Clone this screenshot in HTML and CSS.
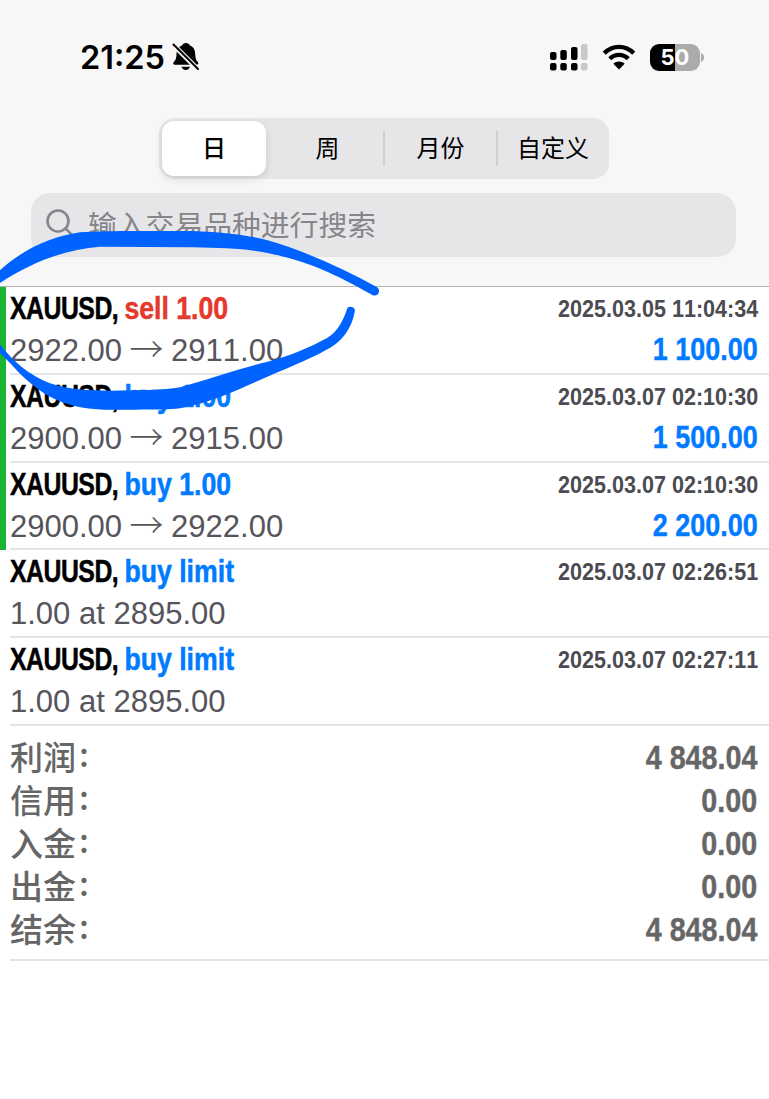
FILE: index.html
```html
<!DOCTYPE html>
<html lang="zh-CN">
<head>
  <meta charset="UTF-8">
  <meta name="viewport" content="width=device-width, initial-scale=1.0">
  <title>XAUUSD</title>
  <link rel="stylesheet" href="styles.css">
</head>
<body>
  <header class="header">
    <div class="status-bar">
      <div class="status-left">
        <span class="time">21:25</span>
        <svg class="bell" width="28" height="30" viewBox="0 0 28 30">
          <path d="M14 1c2 0 3.400 1 3.800 2.300 3.700 1.500 5.300 4.500 5.400 8.400.1 4.500.8 6.300 2.500 8.100 1 1.100 1 2.900-.7 2.900H2.500c-1.700 0-1.600-1.800-.6-2.900 1.800-1.800 2.500-3.600 2.600-8.100.1-3.900 1.900-6.900 5.700-8.400C10.600 2 12 1 14 1z"/>
          <path d="M9.500 24.700h8.500c-.5 2-2 3.200-4.200 3.200s-3.800-1.200-4.300-3.200z"/>
          <path d="M1 2.500l25 25" stroke="#f7f7f7" stroke-width="5"/>
          <path d="M1.500 2.500l24.500 24.500" stroke="#000" stroke-width="2" stroke-linecap="round"/>
        </svg>
      </div>
      <div class="status-right">
        <svg width="39" height="28" viewBox="0 0 39 28">
          <rect x="1" y="9" width="6.500" height="8" rx="2"/>
          <rect x="11.300" y="7" width="6.500" height="10" rx="2"/>
          <rect x="22" y="4" width="6.500" height="13" rx="2"/>
          <rect x="32" y="1" width="6.500" height="16" rx="2" fill="#c8c8c8"/>
          <rect x="1" y="20" width="6.500" height="7.500" rx="2"/>
          <rect x="11.300" y="20" width="6.500" height="7.500" rx="2"/>
          <rect x="22" y="20" width="6.500" height="7.500" rx="2"/>
          <rect x="32" y="20" width="6.500" height="7.500" rx="2" fill="#c8c8c8"/>
        </svg>
        <svg class="wifi" width="34" height="26" viewBox="0 0 34 26">
          <path d="M2.300 9.200C10.500.8 23.500.8 31.700 9.200" fill="none" stroke="#000" stroke-width="4.400"/>
          <path d="M7.800 14.800c5.200-5.200 13.200-5.200 18.400 0" fill="none" stroke="#000" stroke-width="4.400"/>
          <path d="M17 25.500l-5.700-5.700c3.200-3.200 8.200-3.200 11.400 0z"/>
        </svg>
        <div class="battery"><span>50</span></div>
        <svg class="battery-tip" width="4" height="9" viewBox="0 0 4 9"><path d="M0 0c4 1.500 4 7.500 0 9z" fill="#ababab"/></svg>
      </div>
    </div>
    <div class="tabs">
      <div class="tab active">日</div>
      <div class="tab">周</div>
      <div class="tab divided">月份</div>
      <div class="tab divided">自定义</div>
    </div>
    <div class="search">
      <svg width="29" height="29" viewBox="0 0 29 29" fill="none" stroke="#85858a" stroke-width="2.600" stroke-linecap="round">
        <circle cx="12" cy="12" r="10.500"/>
        <path d="M19.700 19.700l7.500 7.500"/>
      </svg>
      <span>输入交易品种进行搜索</span>
    </div>
  </header>

  <main>
    <div class="deal closed">
      <div class="line">
        <div class="title"><span class="symbol">XAUUSD,</span><span class="sell">sell 1.00</span></div>
        <div class="date">2025.03.05 11:04:34</div>
      </div>
      <div class="line">
        <div class="price">2922.00<span class="arrow">→</span>2911.00</div>
        <div class="profit">1 100.00</div>
      </div>
    </div>
    <div class="deal closed">
      <div class="line">
        <div class="title"><span class="symbol">XAUUSD,</span><span class="buy">buy 1.00</span></div>
        <div class="date">2025.03.07 02:10:30</div>
      </div>
      <div class="line">
        <div class="price">2900.00<span class="arrow">→</span>2915.00</div>
        <div class="profit">1 500.00</div>
      </div>
    </div>
    <div class="deal closed">
      <div class="line">
        <div class="title"><span class="symbol">XAUUSD,</span><span class="buy">buy 1.00</span></div>
        <div class="date">2025.03.07 02:10:30</div>
      </div>
      <div class="line">
        <div class="price">2900.00<span class="arrow">→</span>2922.00</div>
        <div class="profit">2 200.00</div>
      </div>
    </div>
    <div class="deal">
      <div class="line">
        <div class="title"><span class="symbol">XAUUSD,</span><span class="buy">buy limit</span></div>
        <div class="date">2025.03.07 02:26:51</div>
      </div>
      <div class="line">
        <div class="price">1.00 at 2895.00</div>
      </div>
    </div>
    <div class="deal">
      <div class="line">
        <div class="title"><span class="symbol">XAUUSD,</span><span class="buy">buy limit</span></div>
        <div class="date">2025.03.07 02:27:11</div>
      </div>
      <div class="line">
        <div class="price">1.00 at 2895.00</div>
      </div>
    </div>

    <div class="summary">
      <div class="total"><span class="label">利润<i>:</i></span><span class="amount">4 848.04</span></div>
      <div class="total"><span class="label">信用<i>:</i></span><span class="amount">0.00</span></div>
      <div class="total"><span class="label">入金<i>:</i></span><span class="amount">0.00</span></div>
      <div class="total"><span class="label">出金<i>:</i></span><span class="amount">0.00</span></div>
      <div class="total"><span class="label">结余<i>:</i></span><span class="amount">4 848.04</span></div>
    </div>
  </main>

  <!-- Hand-drawn marker around the first deal -->
  <svg class="marker" viewBox="0 0 1200 720">
    <path d="M-10 280C60 212 150 170 240 157C320 151 430 153 550 153C640 153 740 164 800 180C900 208 1020 260 1130 321A12 12 0 0 1 1117 345C1040 300 940 250 850 230C770 207 690 204 580 202L300 200C190 207 80 254 -10 316Z"/>
    <path d="M-10 480C30 535 80 582 150 610C210 630 270 632 330 632C420 630 490 632 540 622C620 600 710 568 800 546C870 528 930 502 980 475C1015 455 1032 415 1040 390A12 12 0 0 1 1064 396C1058 430 1040 465 1010 490C970 522 860 565 780 600C710 632 630 669 540 685C500 690 420 689 340 689C220 690 150 660 90 608C50 575 25 540 -10 510Z"/>
  </svg>
</body>
</html>
```
FILE: styles.css
```css
* {
  box-sizing: border-box;
}
body {
  margin: 0;
  height: 1099px;
  overflow: hidden;
  position: relative;
  background: #fff;
  font-family: "Liberation Sans", "Noto Sans CJK SC", sans-serif;
  font-kerning: none;
}
.header {
  height: 287px;
  background: #f7f7f7;
  border-bottom: 1px solid #b2b2b4;
}
.status-bar {
  height: 118px;
  padding: 37px 64px 0 80px;
  display: flex;
  justify-content: space-between;
}
.status-left, .status-right {
  height: 40px;
  display: flex;
  align-items: center;
}
.time {
  width: 92px;
  font-family: Inter, sans-serif;
  font-size: 32.5px;
  font-weight: 600;
}
.wifi {
  margin: 0 14px;
}
.battery {
  width: 50px;
  height: 27px;
  border-radius: 9px;
  background: linear-gradient(90deg, #000 50%, #ababab 50%);
  color: #fff;
  font: bold 22px/27px Inter, sans-serif;
  text-align: center;
}
.battery-tip {
  margin-left: 1px;
}
.tabs {
  width: 450px;
  height: 61px;
  margin: 0 0 0 159px;
  padding: 3px;
  border-radius: 16px;
  background: #e6e6e8;
  display: flex;
}
.tab {
  width: 113px;
  padding-bottom: 5px;
  display: flex;
  align-items: center;
  justify-content: center;
  flex-shrink: 0;
  font: 24px "Noto Sans CJK SC", sans-serif;
  position: relative;
}
.tab.active {
  width: 104px;
  margin-right: 5px;
  border-radius: 12px;
  background: #fff;
  box-shadow: 0 3px 8px rgba(0, 0, 0, 0.12);
  font-weight: 500;
}
.tab:last-child {
  width: 112px;
}
.divided::before {
  content: "";
  position: absolute;
  left: -1px;
  top: 10px;
  width: 2px;
  height: 35px;
  background: #d0d0d3;
}
.search {
  width: 705px;
  height: 64px;
  margin: 14px 0 0 31px;
  padding: 0 0 3px 15px;
  border-radius: 19px;
  background: #e6e6e8;
  display: flex;
  align-items: center;
  gap: 13px;
  color: #85858a;
  font: 28.8px "Noto Sans CJK SC", sans-serif;
}
.deal {
  height: 87.8px;
  padding-left: 10px;
  background: linear-gradient(#e4e4e6, #e4e4e6) 10px 100% / 100% 2px no-repeat;
}
.closed {
  padding-left: 4px;
  border-left: 6px solid #18b432;
  background-position: 4px 100%;
}
.line {
  height: 41px;
  padding-right: 11px;
  display: flex;
  justify-content: space-between;
  line-height: 44px;
  white-space: nowrap;
}
.title {
  font-size: 31px;
  font-weight: bold;
  transform: scaleX(0.8);
  transform-origin: left;
  -webkit-text-stroke: 0.5px currentColor;
}
.symbol {
  letter-spacing: -0.6px;
  margin-right: 8px;
}
.sell, .buy {
  display: inline-block;
  transform: scaleX(1.075);
  transform-origin: left;
}
.sell {
  color: #e53a2b;
}
.buy, .profit {
  color: #007aff;
}
.date {
  color: #4b4b51;
  font-size: 24.7px;
  font-weight: bold;
  transform: scaleX(0.873);
  transform-origin: right;
}
.price {
  height: 44px;
  padding-top: 1px;
  color: #55555b;
  font-size: 31px;
}
.arrow {
  display: inline-block;
  width: 49px;
  text-align: center;
  font: 300 34px/34px "Noto Sans CJK SC", sans-serif;
  vertical-align: -1px;
}
.profit, .amount {
  font-size: 31px;
  font-weight: bold;
  transform: scaleX(0.87);
  transform-origin: right;
  -webkit-text-stroke: 0.4px currentColor;
}
.summary {
  height: 235px;
  margin-left: 10px;
  padding: 11px 12px 0 0;
  border-bottom: 2px solid #e4e4e6;
  color: #666;
}
.total {
  height: 43px;
  display: flex;
  justify-content: space-between;
  line-height: 42px;
}
.label {
  font: 500 33px/38px "Noto Sans CJK SC", sans-serif;
}
.label i {
  font-style: normal;
  margin-left: 3px;
  vertical-align: 3px;
  line-height: 1;
}
.amount {
  font-size: 33px;
}
.marker {
  position: absolute;
  left: 0;
  top: 180px;
  width: 400px;
  height: 240px;
  fill: #0062ff;
}
```
